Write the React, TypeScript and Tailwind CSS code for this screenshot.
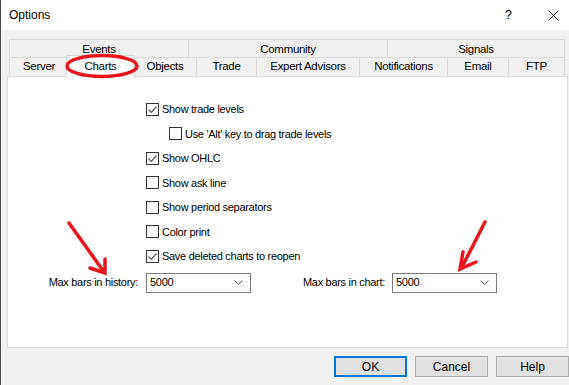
import React from 'react'

const row1 = [
  { label: 'Events', w: 'w-[179px]' },
  { label: 'Community', w: 'w-[199px]' },
  { label: 'Signals', w: 'w-[178px]' },
]

const row2 = [
  { label: 'Server', w: 'w-[59px]' },
  { label: 'Charts', w: 'w-[69px]', active: true },
  { label: 'Objects', w: 'w-[63px]' },
  { label: 'Trade', w: 'w-[60px]' },
  { label: 'Expert Advisors', w: 'w-[103px]' },
  { label: 'Notifications', w: 'w-[88px]' },
  { label: 'Email', w: 'w-[61px]' },
  { label: 'FTP', w: 'w-[57px]' },
]

const options = [
  { label: 'Show trade levels', checked: true },
  { label: "Use 'Alt' key to drag trade levels", checked: false, indent: true },
  { label: 'Show OHLC', checked: true },
  { label: 'Show ask line', checked: false },
  { label: 'Show period separators', checked: false },
  { label: 'Color print', checked: false },
  { label: 'Save deleted charts to reopen', checked: true },
]

function CheckBox({ checked }: { checked: boolean }) {
  return (
    <span className="w-[13px] h-[13px] border border-[#333333] bg-white flex items-center justify-center shrink-0">
      {checked && (
        <svg width="11" height="11" viewBox="0 0 11 11">
          <polyline points="1.5,5.5 4.3,8.3 9.5,2.5" fill="none" stroke="#555555" strokeWidth="1.2" />
        </svg>
      )}
    </span>
  )
}

function Combo({ value }: { value: string }) {
  return (
    <div className="w-[105px] h-[20px] border border-[#7a7a7a] bg-white flex items-center justify-between pl-[3px] pr-[7px]">
      <span>{value}</span>
      <svg width="9" height="5" viewBox="0 0 9 5">
        <polyline points="0.5,0.5 4.5,4.5 8.5,0.5" fill="none" stroke="#606060" strokeWidth="1" />
      </svg>
    </div>
  )
}

export default function App() {
  return (
    <div
      className="relative w-[569px] h-[385px] overflow-hidden bg-[#f0f0f0] border-l border-[#4a4a4a] text-[11px] tracking-[-0.3px] text-black"
      style={{ fontFamily: '"Liberation Sans", Arial, sans-serif' }}
    >
      {/* Title bar */}
      <div className="h-[30px] bg-white flex items-center pl-[8px] text-[12px] tracking-normal">
        <span className="pb-[1px]">Options</span>
        <span className="ml-auto mr-[36px] text-[13px] pb-[1px]">?</span>
        <svg className="mr-[10px]" width="11" height="11" viewBox="0 0 11 11">
          <path d="M0.5 0.5 L10.5 10.5 M10.5 0.5 L0.5 10.5" stroke="#111111" strokeWidth="1" />
        </svg>
      </div>

      <div className="pt-[9px] pl-[6px]">
        {/* Tabs */}
        <div className="ml-[2px] text-[11.5px]">
          <div className="flex h-[18px]">
            {row1.map((t, i) => (
              <div
                key={t.label}
                className={`${t.w} h-[18px] border-t border-l border-[#d9d9d9] flex items-start justify-center pt-[1px] ${i === row1.length - 1 ? 'border-r' : ''}`}
              >
                {t.label}
              </div>
            ))}
          </div>
          <div className="flex h-[19px] items-start">
            {row2.map((t, i) =>
              t.active ? (
                <div
                  key={t.label}
                  className={`${t.w} relative z-10 -mx-[2px] -mt-[2px] h-[22px] bg-white border-t border-l border-r border-[#d9d9d9] flex items-start justify-center pt-[2px]`}
                >
                  {t.label}
                </div>
              ) : (
                <div
                  key={t.label}
                  className={`${t.w} h-[19px] border-t border-l border-[#d9d9d9] flex items-center justify-center ${i === row2.length - 1 ? 'border-r' : ''}`}
                >
                  {t.label}
                </div>
              )
            )}
          </div>
        </div>

        {/* Panel */}
        <div className="w-[561px] h-[272px] bg-white border border-[#d9d9d9]">
          <div className="pl-[138px] pt-[20px] flex flex-col">
            {options.map((o) => (
              <div
                key={o.label}
                className={`h-[24.5px] flex items-center gap-[3px] ${o.indent ? 'pl-[23px]' : ''}`}
              >
                <CheckBox checked={o.checked} />
                <span>{o.label}</span>
              </div>
            ))}
          </div>
          <div className="mt-[4px] flex items-center">
            <div className="w-[130px] text-right">Max bars in history:</div>
            <div className="ml-[8px]">
              <Combo value="5000" />
            </div>
            <div className="w-[134px] text-right">Max bars in chart:</div>
            <div className="ml-[7px]">
              <Combo value="5000" />
            </div>
          </div>
        </div>
      </div>

      {/* Buttons */}
      <div className="mt-[8px] pl-[333px] flex gap-[8px] text-[12px] tracking-normal">
        <button className="w-[73px] h-[21px] bg-[#e1e1e1] border-2 border-[#0078d7] flex items-center justify-center">
          OK
        </button>
        <button className="w-[73px] h-[21px] bg-[#e1e1e1] border border-[#adadad] flex items-center justify-center">
          Cancel
        </button>
        <button className="w-[73px] h-[21px] bg-[#e1e1e1] border border-[#adadad] flex items-center justify-center shrink-0">
          Help
        </button>
      </div>

      {/* Red annotations */}
      <svg className="absolute left-0 top-0 z-20 pointer-events-none" width="569" height="385" viewBox="0 0 569 385">
        <ellipse cx="101" cy="66" rx="35" ry="10.5" fill="none" stroke="#e8141c" strokeWidth="3.5" />
        <g stroke="#e8141c" strokeWidth="3.5" strokeLinecap="round" fill="none">
          <path d="M68 223 L103 272" />
          <path d="M89 268 L104 273 L104 259" />
          <path d="M484 222 L461 267" />
          <path d="M462 252 L459 269 L475 262" />
        </g>
      </svg>
    </div>
  )
}
